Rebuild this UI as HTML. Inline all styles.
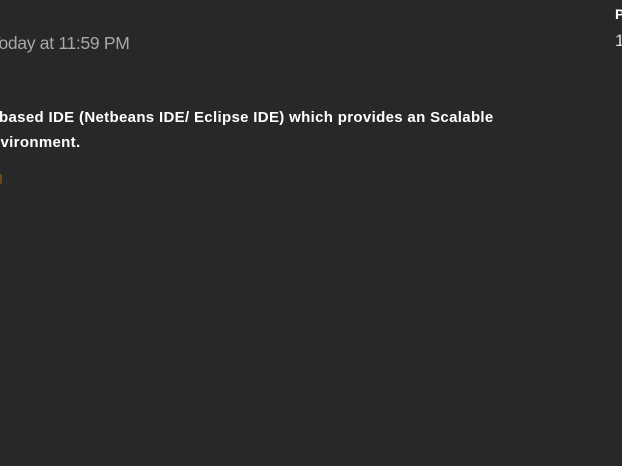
<!DOCTYPE html>
<html><head><style>
html,body{margin:0;padding:0;width:622px;height:466px;overflow:hidden;background:#282828;font-family:"Liberation Sans",sans-serif;}
.t{position:absolute;white-space:nowrap;}
</style></head><body>
<div class="t" style="left:-10px;top:33px;font-size:17.5px;color:#a8a8a8;letter-spacing:-0.3px;">Today at 11:59 PM</div>
<div class="t" style="left:-1px;top:109px;font-size:15px;font-weight:bold;color:#fff;letter-spacing:0.33px;">based IDE (Netbeans IDE/ Eclipse IDE) which provides an Scalable</div>
<div class="t" style="left:-9px;top:134px;font-size:15px;font-weight:bold;color:#fff;letter-spacing:0.33px;">nvironment.</div>
<div class="t" style="left:-3px;top:174px;width:5px;height:10px;background:#6a4a1a;border-radius:2px;"></div>
<div class="t" style="left:615px;top:6px;font-size:14px;font-weight:bold;color:#fff;">P</div>
<div class="t" style="left:615px;top:31px;font-size:17px;color:#e0e0e0;">1</div>
</body></html>
